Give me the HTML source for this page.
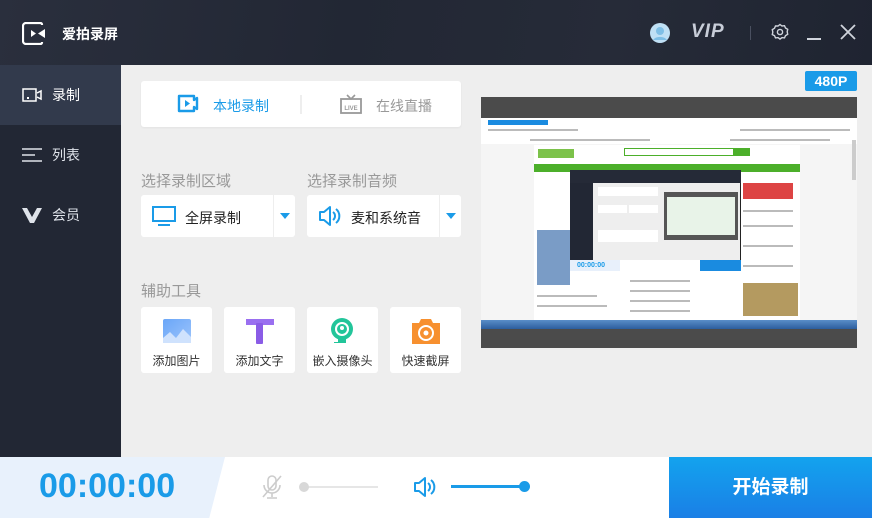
<!DOCTYPE html><html><head><meta charset="utf-8"><style>
*{margin:0;padding:0;box-sizing:border-box}
body{width:872px;height:518px;overflow:hidden;font-family:"Liberation Sans","Noto Sans CJK SC",sans-serif;background:#eeeeee;position:relative}
.abs{position:absolute}
.top{left:0;top:0;width:872px;height:65px;background:linear-gradient(100deg,#2a2f3d,#222734 40%,#262b38 70%,#1f2431)}
.side{left:0;top:65px;width:121px;height:392px;background:#222734}
.nav{position:absolute;left:0;width:121px;height:60px;color:#dfe3ea;font-size:14px;line-height:60px;padding-left:52px}
.card{background:#fff;border-radius:3px}
.lbl{color:#999;font-size:15px}
.tool{position:absolute;top:307px;width:71px;height:66px;background:#fff;border-radius:3px;font-size:12px;color:#333;text-align:center}
.tool span{position:absolute;left:0;right:0;top:45px}
.ln{position:absolute;height:2px;background:#bbb}
</style></head><body>
<div class="abs top"></div>
<svg class="abs" style="left:22px;top:22px" width="26" height="23" viewBox="0 0 26 23"><path d="M20 3V2.5A1.5 1.5 0 0 0 18.5 1H4A3 3 0 0 0 1 4v15a3 3 0 0 0 3 3h14.5a1.5 1.5 0 0 0 1.5-1.5V20" fill="none" stroke="#fff" stroke-width="2.2"/><path d="M9 8l5 3.5-5 3.5z" fill="#fff"/><path d="M16 11.5l7-4.5v9z" fill="#fff"/></svg>
<div class="abs" style="left:62px;top:24px;color:#fff;font-size:14px;font-weight:bold">爱拍录屏</div>
<svg class="abs" style="left:649px;top:22px" width="22" height="22"><circle cx="11" cy="11" r="10" fill="#bfe0f5"/><circle cx="11" cy="9" r="4" fill="#7fbfe6"/><path d="M4 18a8 6 0 0 1 14 0z" fill="#7fbfe6"/></svg>
<div class="abs" style="left:691px;top:21px;color:#c8cdd8;font-size:19px;font-weight:bold;font-style:italic;letter-spacing:1px">VIP</div>
<div class="abs" style="left:750px;top:26px;width:1px;height:14px;background:#4a5060"></div>
<svg class="abs" style="left:771px;top:23px" width="18" height="18" viewBox="0 0 18 18"><path d="M9 1.5l2 1.5 2.5-.3 1 2.3 2.2 1.3-.5 2.5.5 2.5-2.2 1.3-1 2.3-2.5-.3-2 1.5-2-1.5-2.5.3-1-2.3L1.3 11.6l.5-2.5-.5-2.5 2.2-1.3 1-2.3L7 3z" fill="none" stroke="#d0d4dc" stroke-width="1.4"/><circle cx="9" cy="9" r="2.6" fill="none" stroke="#d0d4dc" stroke-width="1.4"/></svg>
<div class="abs" style="left:807px;top:38px;width:14px;height:2px;background:#d0d4dc"></div>
<svg class="abs" style="left:840px;top:24px" width="16" height="16"><path d="M1 1L15 15M15 1L1 15" stroke="#d0d4dc" stroke-width="1.8"/></svg>
<div class="abs side"></div>
<div class="abs" style="left:0;top:65px;width:121px;height:60px;background:#323a4c"></div>
<svg class="abs" style="left:22px;top:88px" width="20" height="14"><rect x="1" y="1" width="13" height="12" fill="none" stroke="#fff" stroke-width="1.5"/><rect x="5" y="9" width="2" height="2" fill="#fff"/><path d="M15 5l4-2v8l-4-2" fill="none" stroke="#fff" stroke-width="1.5"/></svg>
<div class="nav" style="top:65px;color:#fff">录制</div>
<svg class="abs" style="left:22px;top:148px" width="20" height="14"><path d="M0 1h20M0 7h13M0 13h20" stroke="#dfe3ea" stroke-width="1.6"/></svg>
<div class="nav" style="top:125px">列表</div>
<svg class="abs" style="left:22px;top:208px" width="20" height="15"><path d="M0 0h5l5 9 5-9h5l-8 15h-4z" fill="#dfe3ea"/></svg>
<div class="nav" style="top:185px">会员</div>

<div class="abs card" style="left:141px;top:81px;width:320px;height:46px;box-shadow:0 1px 2px rgba(0,0,0,.05)"></div>
<svg class="abs" style="left:177px;top:94px" width="22" height="19" viewBox="0 0 22 19"><path d="M2 2h15v4l3-2v11l-3-2v4H2z" fill="none" stroke="#1a9be8" stroke-width="2.4" stroke-linejoin="round"/><path d="M8 6l5 3.5-5 3.5z" fill="#1a9be8"/></svg>
<div class="abs" style="left:213px;top:96px;color:#1a9be8;font-size:14px">本地录制</div>
<div class="abs" style="left:300px;top:95px;width:2px;height:19px;background:#eee"></div>
<svg class="abs" style="left:340px;top:94px" width="22" height="20"><path d="M7 1l4 4 4-4" fill="none" stroke="#999" stroke-width="1.6"/><rect x="1" y="5" width="20" height="14" fill="none" stroke="#999" stroke-width="1.8"/><text x="11" y="16" font-size="6" font-family="Liberation Sans" fill="#999" text-anchor="middle" font-weight="bold">LIVE</text></svg>
<div class="abs" style="left:376px;top:96px;color:#999;font-size:14px">在线直播</div>

<div class="abs lbl" style="left:141px;top:170px">选择录制区域</div>
<div class="abs lbl" style="left:307px;top:170px">选择录制音频</div>
<div class="abs card" style="left:141px;top:195px;width:154px;height:42px"></div>
<div class="abs" style="left:273px;top:195px;width:1px;height:42px;background:#eee"></div>
<svg class="abs" style="left:152px;top:206px" width="24" height="21"><rect x="1" y="1" width="22" height="14" fill="none" stroke="#1a9be8" stroke-width="2"/><rect x="6" y="18" width="12" height="2" fill="#1a9be8"/></svg>
<div class="abs" style="left:185px;top:208px;font-size:14px;color:#222">全屏录制</div>
<svg class="abs" style="left:280px;top:213px" width="10" height="6"><path d="M0 0h10L5 6z" fill="#1a9be8"/></svg>
<div class="abs card" style="left:307px;top:195px;width:154px;height:42px"></div>
<div class="abs" style="left:439px;top:195px;width:1px;height:42px;background:#eee"></div>
<svg class="abs" style="left:318px;top:205px" width="24" height="22"><path d="M2 7h4l6-5v18l-6-5H2z" fill="none" stroke="#1a9be8" stroke-width="2" stroke-linejoin="round"/><path d="M15 7a5 5 0 0 1 0 8M18 4a9 9 0 0 1 0 14" fill="none" stroke="#1a9be8" stroke-width="2"/></svg>
<div class="abs" style="left:351px;top:208px;font-size:14px;color:#222">麦和系统音</div>
<svg class="abs" style="left:446px;top:213px" width="10" height="6"><path d="M0 0h10L5 6z" fill="#1a9be8"/></svg>

<div class="abs lbl" style="left:141px;top:280px">辅助工具</div>
<div class="tool" style="left:141px"><svg class="abs" style="left:22px;top:12px" width="28" height="24"><defs><linearGradient id="g1" x1="0" y1="0" x2="1" y2="1"><stop offset="0" stop-color="#6aa6f8"/><stop offset="1" stop-color="#9cc4fb"/></linearGradient></defs><rect width="28" height="24" rx="2" fill="url(#g1)"/><path d="M0 24V19l7-6 6 6 7-9 8 8v6z" fill="#cfe2fd"/></svg><span>添加图片</span></div>
<div class="tool" style="left:224px"><svg class="abs" style="left:22px;top:12px" width="28" height="25"><rect width="28" height="6" fill="#9a6ff0"/><rect x="10" y="4" width="7" height="21" rx="1" fill="#8a5ce6"/></svg><span>添加文字</span></div>
<div class="tool" style="left:307px"><svg class="abs" style="left:22px;top:10px" width="26" height="28"><circle cx="13" cy="12" r="11" fill="#22c59a"/><circle cx="13" cy="12" r="6" fill="none" stroke="#fff" stroke-width="2"/><circle cx="13" cy="11" r="2" fill="#fff"/><path d="M9 22h8v4H5v-1h4z" fill="#22c59a"/></svg><span>嵌入摄像头</span></div>
<div class="tool" style="left:390px"><svg class="abs" style="left:22px;top:12px" width="28" height="25"><path d="M9 0h10l2 4h7v21H0V4h7z" fill="#f7902f"/><circle cx="14" cy="14" r="7" fill="none" stroke="#fff" stroke-width="2"/><circle cx="14" cy="14" r="2.5" fill="#fff"/></svg><span>快速截屏</span></div>

<div class="abs" style="left:805px;top:71px;width:52px;height:20px;background:#1a9be8;border-radius:2px;color:#fff;font-weight:bold;font-size:14px;text-align:center;line-height:20px">480P</div>
<div class="abs" style="left:481px;top:97px;width:376px;height:251px;background:#4b4b4b"></div>
<div class="abs" style="left:481px;top:118px;width:376px;height:203px;background:#f5f5f5"></div>
<div class="abs" style="left:481px;top:118px;width:376px;height:26px;background:#fff"></div>
<div class="abs" style="left:488px;top:120px;width:60px;height:5px;background:#1a8be0"></div>
<div class="ln" style="left:488px;top:129px;width:90px"></div><div class="ln" style="left:740px;top:129px;width:110px"></div>
<div class="ln" style="left:530px;top:139px;width:120px"></div><div class="ln" style="left:730px;top:139px;width:100px"></div>
<div class="abs" style="left:534px;top:145px;width:266px;height:175px;background:#fff"></div>
<div class="abs" style="left:538px;top:149px;width:36px;height:9px;background:#7cc24a"></div>
<div class="abs" style="left:534px;top:164px;width:266px;height:8px;background:#4caf2a"></div>
<div class="abs" style="left:624px;top:148px;width:110px;height:8px;border:1px solid #4caf2a"></div>
<div class="abs" style="left:734px;top:148px;width:16px;height:8px;background:#4caf2a"></div>
<div class="abs" style="left:537px;top:230px;width:33px;height:55px;background:#7a9cc6"></div>
<div class="ln" style="left:537px;top:295px;width:60px"></div><div class="ln" style="left:537px;top:305px;width:70px"></div>
<div class="ln" style="left:630px;top:280px;width:60px"></div><div class="ln" style="left:630px;top:290px;width:60px"></div><div class="ln" style="left:630px;top:300px;width:60px"></div><div class="ln" style="left:630px;top:310px;width:60px"></div>
<div class="abs" style="left:743px;top:183px;width:50px;height:16px;background:#d44"></div>
<div class="ln" style="left:743px;top:210px;width:50px"></div><div class="ln" style="left:743px;top:225px;width:50px"></div><div class="ln" style="left:743px;top:245px;width:50px"></div><div class="ln" style="left:743px;top:265px;width:50px"></div>
<div class="abs" style="left:743px;top:283px;width:55px;height:33px;background:#b49a60"></div>
<div class="abs" style="left:852px;top:140px;width:4px;height:40px;background:#ccc"></div>
<div class="abs" style="left:570px;top:170px;width:171px;height:101px;background:#eee;border:1px solid #222"></div>
<div class="abs" style="left:570px;top:170px;width:171px;height:13px;background:#252a37"></div>
<div class="abs" style="left:570px;top:183px;width:23px;height:78px;background:#222734"></div>
<div class="abs" style="left:598px;top:187px;width:60px;height:9px;background:#fff"></div>
<div class="abs" style="left:598px;top:205px;width:29px;height:8px;background:#fff"></div><div class="abs" style="left:629px;top:205px;width:29px;height:8px;background:#fff"></div>
<div class="abs" style="left:598px;top:230px;width:60px;height:12px;background:#fff"></div>
<div class="abs" style="left:664px;top:192px;width:74px;height:48px;background:#555"></div>
<div class="abs" style="left:667px;top:197px;width:68px;height:38px;background:#e8f3e8"></div>
<div class="abs" style="left:570px;top:260px;width:130px;height:11px;background:#fff"></div>
<div class="abs" style="left:570px;top:260px;width:50px;height:11px;background:#e8f0fb;color:#1a9be8;font-size:7px;font-weight:bold;line-height:11px;padding-left:7px">00:00:00</div>
<div class="abs" style="left:700px;top:260px;width:41px;height:11px;background:#1a8be0"></div>
<div class="abs" style="left:481px;top:320px;width:376px;height:9px;background:linear-gradient(#5a8ec8,#2c5e9e)"></div>

<div class="abs" style="left:0;top:457px;width:872px;height:61px;background:#fff"></div>
<div class="abs" style="left:0;top:457px;width:225px;height:61px;background:#e8f1fc;clip-path:polygon(0 0,100% 0,93% 100%,0 100%)"></div>
<div class="abs" style="left:39px;top:467px;color:#1a9be8;font-size:34px;font-weight:bold">00:00:00</div>
<svg class="abs" style="left:261px;top:475px" width="22" height="24"><rect x="7" y="1" width="8" height="14" rx="4" fill="none" stroke="#ccc" stroke-width="1.6"/><path d="M3 10a8 8 0 0 0 16 0M11 18v4M6 23h10M20 1L2 22" fill="none" stroke="#ccc" stroke-width="1.6"/></svg>
<div class="abs" style="left:304px;top:486px;width:74px;height:2px;background:#e6e6e6"></div>
<div class="abs" style="left:299px;top:482px;width:10px;height:10px;border-radius:50%;background:#d8d8d8"></div>
<svg class="abs" style="left:413px;top:476px" width="26" height="22"><path d="M2 7h4l6-5v18l-6-5H2z" fill="none" stroke="#1a9be8" stroke-width="2" stroke-linejoin="round"/><path d="M15 7a5 5 0 0 1 0 8M18 4a9 9 0 0 1 0 14" fill="none" stroke="#1a9be8" stroke-width="2"/></svg>
<div class="abs" style="left:451px;top:485px;width:72px;height:3px;background:#1a9be8"></div>
<div class="abs" style="left:519px;top:481px;width:11px;height:11px;border-radius:50%;background:#1a9be8"></div>
<div class="abs" style="left:669px;top:457px;width:203px;height:61px;background:linear-gradient(#13a3ee,#1a7fe6);color:#fff;font-size:19px;font-weight:bold;text-align:center;line-height:61px">开始录制</div>
</body></html>
